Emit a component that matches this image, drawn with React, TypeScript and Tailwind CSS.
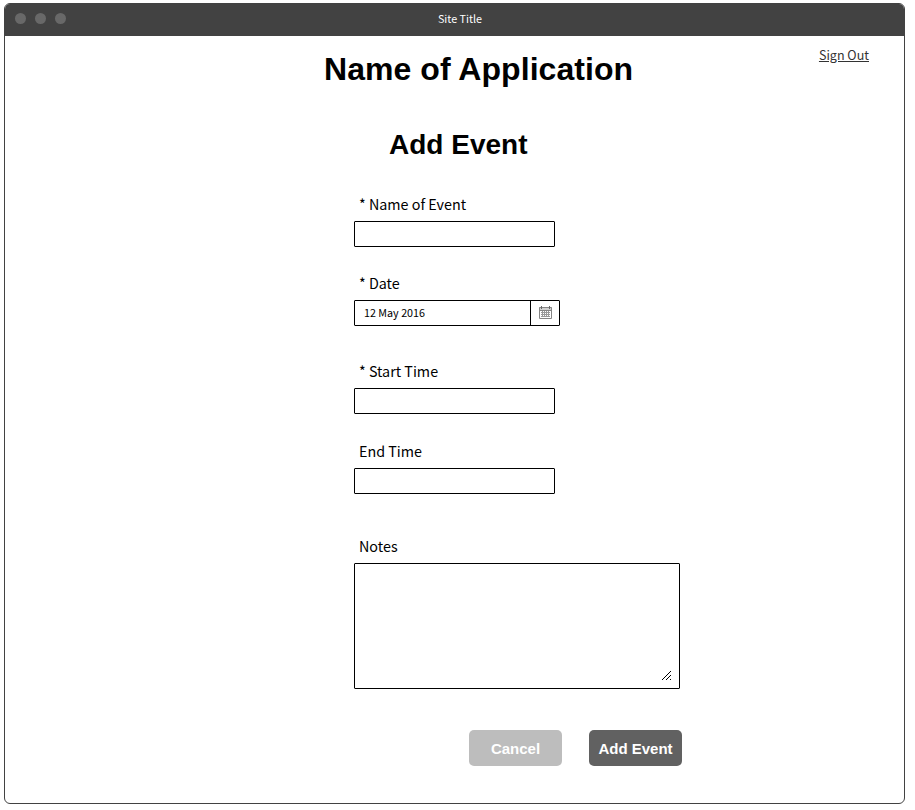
import React from "react";

const sans = "font-['Noto_Sans_CJK_SC','Source_Sans_Pro',sans-serif]";
const arial = "font-['Liberation_Sans',Arial,sans-serif]";

function Label({ children }: { children: React.ReactNode }) {
  return <label className="block h-6 pl-[5px] text-[14.33px] leading-6 whitespace-nowrap">{children}</label>;
}

function Field({ label, className }: { label: string; className: string }) {
  return (
    <div className={className}>
      <Label>{label}</Label>
      <input aria-label={label} className="mt-[5px] block h-[26px] w-[201px] rounded-[1px] border border-black bg-white px-2 text-[10.75px] outline-none" />
    </div>
  );
}

function CalendarIcon() {
  return (
    <svg width="13" height="13" viewBox="0 0 13 13" fill="none" stroke="#858585">
      <path d="M0 1H13V4H0Z" fill="#d0d0d0" stroke="none" />
      <path d="M0.5 1.5H12.5V12.5H0.5ZM0 4.5H13" />
      <path d="M2.5 0V3M10.5 0V3" stroke="#666666" />
      <path d="M2 6.5H11M2 8.5H11M2 10.5H11M3.5 5V11M5.5 5V11M7.5 5V11M9.5 5V11" stroke="#999999" />
    </svg>
  );
}

export default function App() {
  return (
    <div className="h-[810px] w-[915px] bg-white pt-[3px] pl-1 text-black">
      <div className={`flex h-[801px] w-[901px] flex-col overflow-hidden rounded-[6px] border border-[#424242] bg-white ${sans}`}>
        <header className="grid h-8 shrink-0 grid-cols-3 bg-[#424242] text-[10.75px] text-white">
          <div className="flex gap-[9px] pt-[8.5px] pl-[10px]">
            <span className="size-[11px] rounded-full bg-[#686868]" />
            <span className="size-[11px] rounded-full bg-[#686868]" />
            <span className="size-[11px] rounded-full bg-[#686868]" />
          </div>
          <div className="pt-[7px] pl-[11px] text-center leading-4">Site Title</div>
        </header>
        <main className="flex-1">
          <div className="flex h-[66px] justify-between pl-[319px] pr-[35px]">
            <h1 className={`pt-[13px] text-[32px] leading-10 font-bold tracking-[0.05px] whitespace-nowrap ${arial}`}>Name of Application</h1>
            <a className="mt-[9px] h-5 text-[12.54px] leading-5 text-[#333333] underline">Sign Out</a>
          </div>
          <h2 className={`h-[90px] pt-[27px] pl-[384px] text-[28px] leading-8 font-bold ${arial}`}>Add Event</h2>
          <form className="pl-[349px]">
            <Field label="* Name of Event" className="h-[79px]" />
            <div className="h-[88px]">
              <Label>* Date</Label>
              <div className="mt-[5px] flex h-[26px] w-[206px] rounded-[1px] border border-black">
                <span className="flex-1 pl-[9px] text-[10.75px] leading-[23px]">12 May 2016</span>
                <span className="flex w-[29px] justify-center border-l border-black pt-[5px]"><CalendarIcon /></span>
              </div>
            </div>
            <Field label="* Start Time" className="h-20" />
            <Field label="End Time" className="h-[95px]" />
            <div>
              <Label>Notes</Label>
              <div className="mt-[5px] flex h-[126px] w-[326px] items-end justify-end rounded-[1px] border border-black pr-2 pb-2">
                <svg width="9" height="9" viewBox="0 0 9 9" fill="#000" shapeRendering="crispEdges">
                  <path d="M0 8h1v1h-1zM1 7h1v1h-1zM2 6h1v1h-1zM3 5h1v1h-1zM4 4h1v1h-1zM5 3h1v1h-1zM6 2h1v1h-1zM7 1h1v1h-1zM8 0h1v1h-1z" />
                  <path d="M4 8h1v1h-1zM5 7h1v1h-1zM6 6h1v1h-1zM7 5h1v1h-1zM8 4h1v1h-1zM8 8h1v1h-1z" />
                </svg>
              </div>
            </div>
            <div className={`mt-[41px] flex gap-[27px] pl-[115px] text-[15px] font-bold text-white ${arial}`}>
              <button type="button" className="h-9 w-[93px] rounded-[5px] bg-[#bdbdbd] pt-[3px]">Cancel</button>
              <button type="button" className="h-9 w-[93px] rounded-[5px] bg-[#616161] pt-[3px] whitespace-nowrap">Add Event</button>
            </div>
          </form>
        </main>
      </div>
    </div>
  );
}
